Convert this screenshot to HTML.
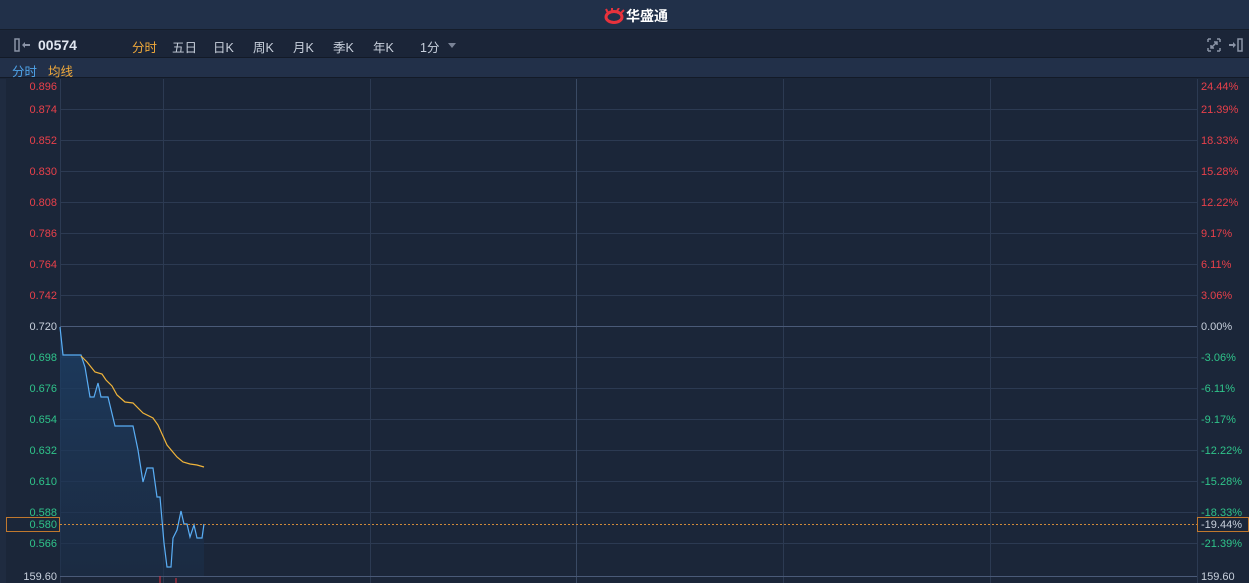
<!DOCTYPE html>
<html><head><meta charset="utf-8"><style>
*{margin:0;padding:0;box-sizing:border-box}
body{width:1249px;height:583px;overflow:hidden;background:#1b2639;font-family:"Liberation Sans","Noto Sans CJK SC",sans-serif;position:relative}
.top{position:absolute;left:0;top:0;width:1249px;height:30px;background:#213049;border-bottom:1px solid #151d2b}
.tb{position:absolute;left:0;top:31px;width:1249px;height:27px;background:#1b2538;border-bottom:1px solid #131a27}
.sb{position:absolute;left:0;top:58px;width:1249px;height:20px;background:#223049;border-bottom:1px solid #131a27}
.t{position:absolute;font-size:12.5px;white-space:nowrap}
</style></head><body>
<div class="top"></div>
<div class="t" style="left:604px;top:6px;color:#fff;font-size:14px;font-weight:bold">
<svg width="22" height="16" viewBox="0 0 22 16" style="vertical-align:-3px"><ellipse cx="10" cy="9" rx="8" ry="5.5" fill="none" stroke="#e8323c" stroke-width="3"/><path d="M4 5 L2 1 M8 3 L8 0 M13 3 L15 0 M17 5 L20 2" stroke="#e8323c" stroke-width="2"/></svg>华盛通</div>
<div class="tb"></div>
<div class="sb"></div>
<svg style="position:absolute;left:14px;top:38px" width="18" height="14"><rect x="1" y="1" width="4" height="12" fill="none" stroke="#8a93a6" stroke-width="1.5"/><path d="M8 7 L11 4 L11 10Z M11 6h5v2h-5z" fill="#8a93a6"/></svg>
<div class="t" style="left:38px;top:37px;color:#e0e6f0;font-size:14px;font-weight:bold">00574</div>
<div class="t" style="left:132px;top:37px;color:#f0a93a">分时</div>
<div class="t" style="left:172px;top:37px;color:#c8d0dc">五日</div>
<div class="t" style="left:213px;top:37px;color:#c8d0dc">日K</div>
<div class="t" style="left:253px;top:37px;color:#c8d0dc">周K</div>
<div class="t" style="left:293px;top:37px;color:#c8d0dc">月K</div>
<div class="t" style="left:333px;top:37px;color:#c8d0dc">季K</div>
<div class="t" style="left:373px;top:37px;color:#c8d0dc">年K</div>
<div class="t" style="left:420px;top:37px;color:#c8d0dc">1分</div>
<div style="position:absolute;left:448px;top:43px;border:4px solid transparent;border-top:5px solid #7a8396"></div>
<svg style="position:absolute;left:1207px;top:38px" width="14" height="14"><path d="M1 1h3M1 1v3M13 1h-3M13 1v3M1 13h3M1 13v-3M13 13h-3M13 13v-3M4 10l6-6M7 4h3v3M4 7v3h3" stroke="#8a93a6" fill="none" stroke-width="1.5"/></svg>
<svg style="position:absolute;left:1228px;top:38px" width="16" height="14"><path d="M1 6h5v2h-5z M5 4 L8 7 L5 10Z" fill="#8a93a6"/><rect x="10" y="1" width="4" height="12" fill="none" stroke="#8a93a6" stroke-width="1.5"/></svg>
<div class="t" style="left:12px;top:61px;color:#4fa3e8">分时</div>
<div class="t" style="left:48px;top:61px;color:#f0a93a">均线</div>

<svg style="position:absolute;left:0;top:79px" width="1249" height="504" viewBox="0 79 1249 504" font-family="Liberation Sans" font-size="11">
<defs><linearGradient id="g" x1="0" y1="0" x2="0" y2="1"><stop offset="0" stop-color="#1d4068" stop-opacity=".8"/><stop offset="1" stop-color="#1b2e48" stop-opacity=".6"/></linearGradient></defs>
<rect x="0" y="79" width="6" height="504" fill="#1f2b40"/>
<g stroke="#2c3a52" stroke-width="1">
<path d="M60.5 79V583M163.5 79V583M370.5 79V583M783.5 79V583M990.5 79V583M1197.5 79V583"/>
<path d="M60 109.5H1197M60 140.5H1197M60 171.5H1197M60 202.5H1197M60 233.5H1197M60 264.5H1197M60 295.5H1197M60 357.5H1197M60 388.5H1197M60 419.5H1197M60 450.5H1197M60 481.5H1197M60 512.5H1197M60 543.5H1197"/>
</g>
<path d="M576.5 79V583" stroke="#3a4a64"/>
<path d="M60 326.5H1197M60 576.5H1197" stroke="#4a5a78"/>
<path d="M60 327L63 355L81 355L85 367L90 397L94 397L98 383L101 397L108 397L115 426L133 426L138 450L143 482L147 468L153 468L157 497L160 497L164 543L167 567L171 567L173 538L177 530L181 511L184 524L187 524L190 537L194 525L197 538L202 538L204 524L204 576L60 576Z" fill="url(#g)"/>
<path d="M60 327L63 355L81 355L85 367L90 397L94 397L98 383L101 397L108 397L115 426L133 426L138 450L143 482L147 468L153 468L157 497L160 497L164 543L167 567L171 567L173 538L177 530L181 511L184 524L187 524L190 537L194 525L197 538L202 538L204 524" fill="none" stroke="#5aaef5" stroke-width="1.2"/>
<path d="M81 356L87 362L95 372L102 374L106 380L112 386L117 395L125 402L133 403L143 413L153 418L158 425L167 445L177 457L183 462L190 464L197 465L204 467" fill="none" stroke="#f0b43a" stroke-width="1.2"/>
<path d="M60 524.5H1197" stroke="#d08a3a" stroke-dasharray="2,2"/>
<path d="M160 576v7M176 578v5" stroke="#e03040"/>
<rect x="6.5" y="517.5" width="53" height="14" fill="none" stroke="#c0782e"/>
<rect x="1197.5" y="517.5" width="51" height="14" fill="none" stroke="#c0782e"/>
<g text-anchor="end" fill="#e8404a">
<text x="57" y="90">0.896</text><text x="57" y="113">0.874</text><text x="57" y="144">0.852</text><text x="57" y="175">0.830</text><text x="57" y="206">0.808</text><text x="57" y="237">0.786</text><text x="57" y="268">0.764</text><text x="57" y="299">0.742</text>
</g>
<text x="57" y="330" text-anchor="end" fill="#c8d0dc">0.720</text>
<g text-anchor="end" fill="#2fc38a">
<text x="57" y="361">0.698</text><text x="57" y="392">0.676</text><text x="57" y="423">0.654</text><text x="57" y="454">0.632</text><text x="57" y="485">0.610</text><text x="57" y="516">0.588</text><text x="57" y="528">0.580</text><text x="57" y="547">0.566</text>
</g>
<text x="57" y="580" text-anchor="end" fill="#c8d0dc">159.60</text>
<g fill="#e8404a">
<text x="1201" y="90">24.44%</text><text x="1201" y="113">21.39%</text><text x="1201" y="144">18.33%</text><text x="1201" y="175">15.28%</text><text x="1201" y="206">12.22%</text><text x="1201" y="237">9.17%</text><text x="1201" y="268">6.11%</text><text x="1201" y="299">3.06%</text>
</g>
<text x="1201" y="330" fill="#c8d0dc">0.00%</text>
<g fill="#2fc38a">
<text x="1201" y="361">-3.06%</text><text x="1201" y="392">-6.11%</text><text x="1201" y="423">-9.17%</text><text x="1201" y="454">-12.22%</text><text x="1201" y="485">-15.28%</text><text x="1201" y="516">-18.33%</text><text x="1201" y="547">-21.39%</text>
</g>
<text x="1201" y="528" fill="#c8d0dc">-19.44%</text>
<text x="1201" y="580" fill="#c8d0dc">159.60</text>
</svg>
</body></html>
